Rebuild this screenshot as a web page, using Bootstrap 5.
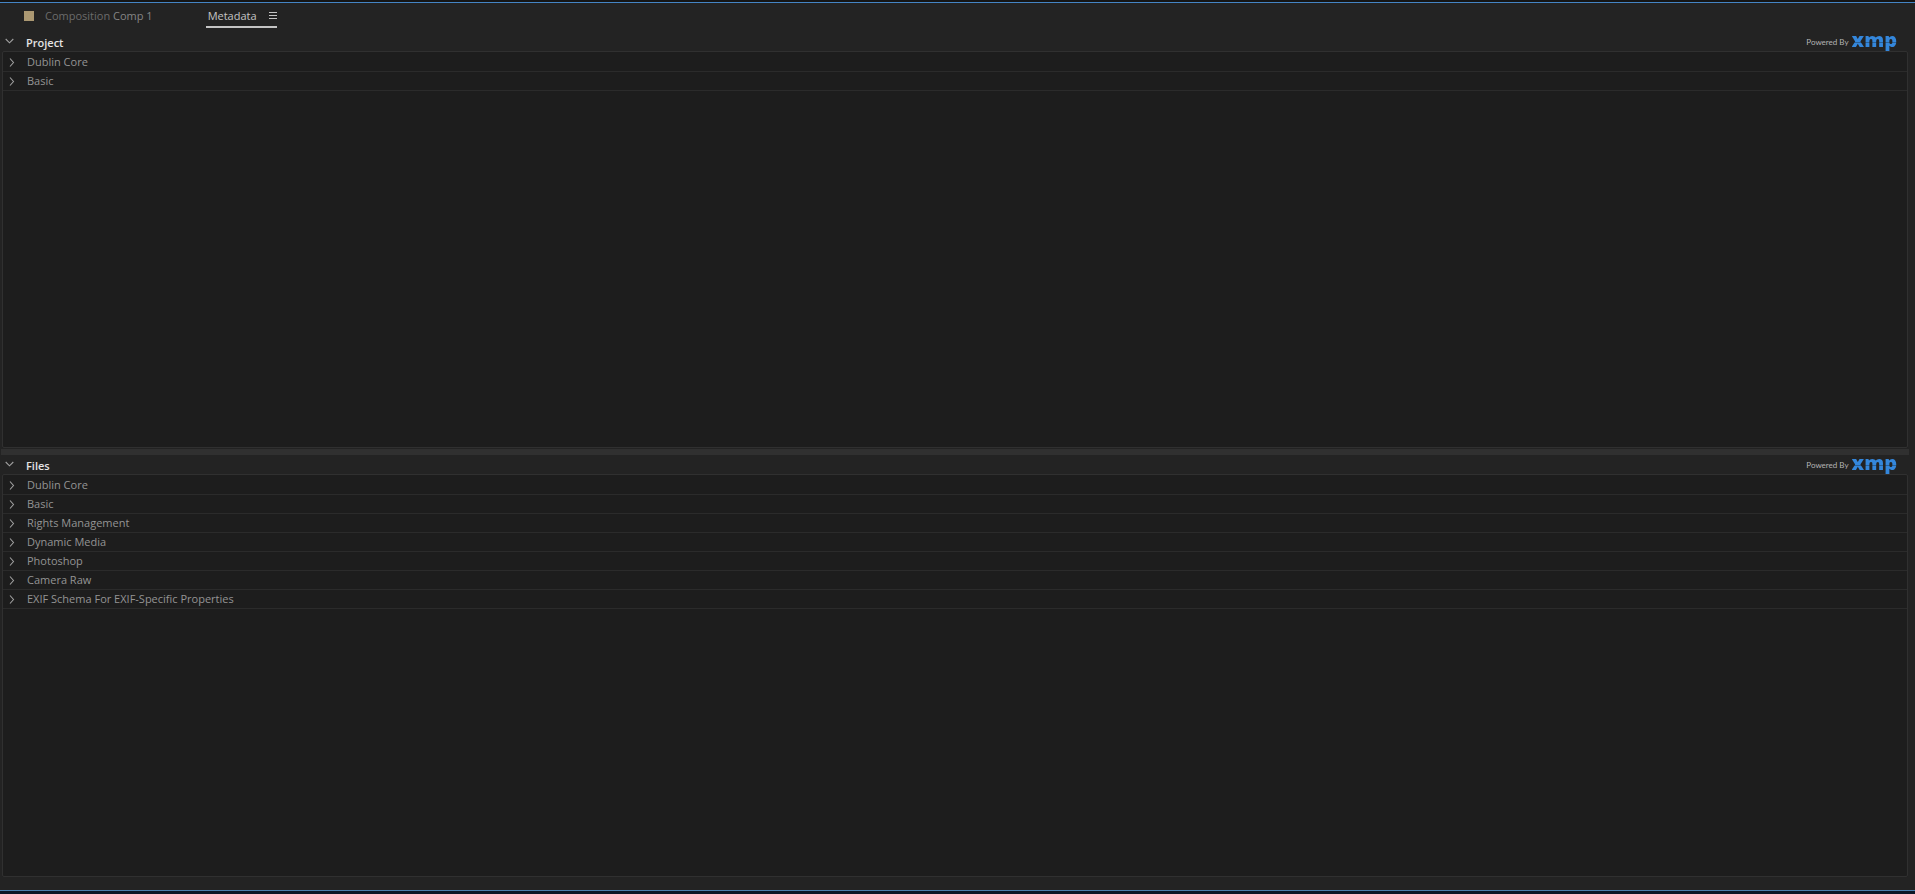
<!DOCTYPE html>
<html lang="en">
<head>
<meta charset="utf-8">
<meta name="viewport" content="width=device-width, initial-scale=1">
<title>Metadata</title>
<link rel="stylesheet" href="https://cdn.jsdelivr.net/npm/bootstrap@5.3.0/dist/css/bootstrap.min.css">
<style>
  body {
    font-family: "Open Sans", "Noto Sans", sans-serif;
    font-size: 11px;
    line-height: 18px;
    background: #151515;
    color: #8c8c8c;
  }
  .btn {
    --bs-btn-padding-x: 0;
    --bs-btn-padding-y: 0;
    --bs-btn-font-family: "Open Sans", "Noto Sans", sans-serif;
    --bs-btn-font-size: 11px;
    --bs-btn-line-height: 18px;
    --bs-btn-border-width: 0;
    --bs-btn-border-radius: 0;
    --bs-btn-color: #949494;
    --bs-btn-hover-color: #c8c8c8;
    --bs-btn-active-color: #c8c8c8;
  }
  .icon { fill: none; stroke: #a0a0a0; stroke-width: 1.1; flex: none; }

  .app-frame { padding-top: 2px; padding-bottom: 3px; background: linear-gradient(#151515 50%, #0b1626 50%); }
  .app-panel { background: #232323; border-top: 1px solid #4484c4; border-bottom: 1px solid #4a7fae; padding: 0 6px 13px 1px; }

  .tab-bar { height: 29px; padding-left: 23px; gap: 53px; }
  .tab-bar .btn { height: 25px; padding-top: 2px; }
  .comp-tab { --bs-btn-color: #6b6b6b; gap: 11px; border-bottom: 2px solid transparent; }
  .comp-tab span { color: #858585; }
  .swatch { width: 10px; height: 10px; background: #ab9872; }
  .meta-tab { --bs-btn-color: #c4c4c4; border-bottom: 2px solid #c4c4c4; padding-left: 2px; gap: 12px; }

  .panel-top { flex: 416 1 0; }
  .panel-bottom { flex: 422 1 0; }
  .panel-head { height: 19px; padding: 0 12px 0 4px; }
  .panel-head .btn { --bs-btn-color: #e4e4e4; font-weight: 600; gap: 12px; padding-top: 2px; }
  .panel-head .icon { margin-bottom: 4px; }
  .powered { font: 8px/20px Lato, sans-serif; color: #b4b4b4; gap: 3px; }
  .xmp-mark {
    padding-bottom: 4px;
    font: 800 20px/16px "Open Sans", sans-serif;
    color: transparent;
    background: linear-gradient(#3487dc 10px, #2a6299 10px, #2a6299 11px, #3487dc 11px);
    -webkit-background-clip: text;
    background-clip: text;
  }
  .schema-box { background: #1d1d1d; border: 1px solid #303030; border-radius: 2px; margin: 0 1px 0 1px; padding-top: 1px; }
  .schema-row { border-bottom: 1px solid #2b2b2b; }
  .schema-row .btn { font-weight: 500; gap: 11px; padding-left: 4px; text-align: left; }
  .splitter { height: 6px; margin-top: 1px; background: #303030; }
</style>
</head>
<body>
<div class="app-frame d-flex flex-column vh-100">
  <main class="app-panel d-flex flex-column flex-grow-1">
    <nav class="tab-bar d-flex align-items-start" aria-label="Panels">
      <button type="button" class="btn comp-tab d-flex align-items-center"><i class="swatch"></i><b class="fw-normal">Composition <span>Comp 1</span></b></button>
      <button type="button" class="btn meta-tab d-flex align-items-center" aria-current="page">Metadata
        <svg class="icon" width="8" height="8" viewBox="0 0 8 8" aria-hidden="true"><path stroke="#c4c4c4" stroke-width="1" d="M0 .5h8M0 3.5h8M0 6.5h8"/></svg>
      </button>
    </nav>

    <section class="panel-top d-flex flex-column">
      <header class="panel-head d-flex justify-content-between align-items-start">
        <button type="button" class="btn d-flex align-items-center" aria-expanded="true"><svg class="icon" width="9" height="9" viewBox="0 0 9 9" aria-hidden="true"><path d="M.7 2l3.8 3.8L8.3 2"/></svg>Project</button>
        <div class="powered d-flex align-items-start">Powered By <span class="xmp-mark">xmp</span></div>
      </header>
      <ul class="schema-box list-unstyled flex-grow-1">
        <li class="schema-row"><button type="button" class="btn d-flex align-items-center w-100" aria-expanded="false"><svg class="icon" width="9" height="9" viewBox="0 0 9 9" aria-hidden="true"><path d="M3 .5l3.5 4-3.5 4"/></svg>Dublin Core</button></li>
        <li class="schema-row"><button type="button" class="btn d-flex align-items-center w-100" aria-expanded="false"><svg class="icon" width="9" height="9" viewBox="0 0 9 9" aria-hidden="true"><path d="M3 .5l3.5 4-3.5 4"/></svg>Basic</button></li>
      </ul>
    </section>

    <div class="splitter" role="separator" aria-orientation="horizontal"></div>

    <section class="panel-bottom d-flex flex-column">
      <header class="panel-head d-flex justify-content-between align-items-start">
        <button type="button" class="btn d-flex align-items-center" aria-expanded="true"><svg class="icon" width="9" height="9" viewBox="0 0 9 9" aria-hidden="true"><path d="M.7 2l3.8 3.8L8.3 2"/></svg>Files</button>
        <div class="powered d-flex align-items-start">Powered By <span class="xmp-mark">xmp</span></div>
      </header>
      <ul class="schema-box list-unstyled flex-grow-1">
        <li class="schema-row"><button type="button" class="btn d-flex align-items-center w-100" aria-expanded="false"><svg class="icon" width="9" height="9" viewBox="0 0 9 9" aria-hidden="true"><path d="M3 .5l3.5 4-3.5 4"/></svg>Dublin Core</button></li>
        <li class="schema-row"><button type="button" class="btn d-flex align-items-center w-100" aria-expanded="false"><svg class="icon" width="9" height="9" viewBox="0 0 9 9" aria-hidden="true"><path d="M3 .5l3.5 4-3.5 4"/></svg>Basic</button></li>
        <li class="schema-row"><button type="button" class="btn d-flex align-items-center w-100" aria-expanded="false"><svg class="icon" width="9" height="9" viewBox="0 0 9 9" aria-hidden="true"><path d="M3 .5l3.5 4-3.5 4"/></svg>Rights Management</button></li>
        <li class="schema-row"><button type="button" class="btn d-flex align-items-center w-100" aria-expanded="false"><svg class="icon" width="9" height="9" viewBox="0 0 9 9" aria-hidden="true"><path d="M3 .5l3.5 4-3.5 4"/></svg>Dynamic Media</button></li>
        <li class="schema-row"><button type="button" class="btn d-flex align-items-center w-100" aria-expanded="false"><svg class="icon" width="9" height="9" viewBox="0 0 9 9" aria-hidden="true"><path d="M3 .5l3.5 4-3.5 4"/></svg>Photoshop</button></li>
        <li class="schema-row"><button type="button" class="btn d-flex align-items-center w-100" aria-expanded="false"><svg class="icon" width="9" height="9" viewBox="0 0 9 9" aria-hidden="true"><path d="M3 .5l3.5 4-3.5 4"/></svg>Camera Raw</button></li>
        <li class="schema-row"><button type="button" class="btn d-flex align-items-center w-100" aria-expanded="false"><svg class="icon" width="9" height="9" viewBox="0 0 9 9" aria-hidden="true"><path d="M3 .5l3.5 4-3.5 4"/></svg>EXIF Schema For EXIF-Specific Properties</button></li>
      </ul>
    </section>
  </main>
</div>
<script src="https://cdn.jsdelivr.net/npm/bootstrap@5.3.0/dist/js/bootstrap.bundle.min.js"></script>
</body>
</html>
